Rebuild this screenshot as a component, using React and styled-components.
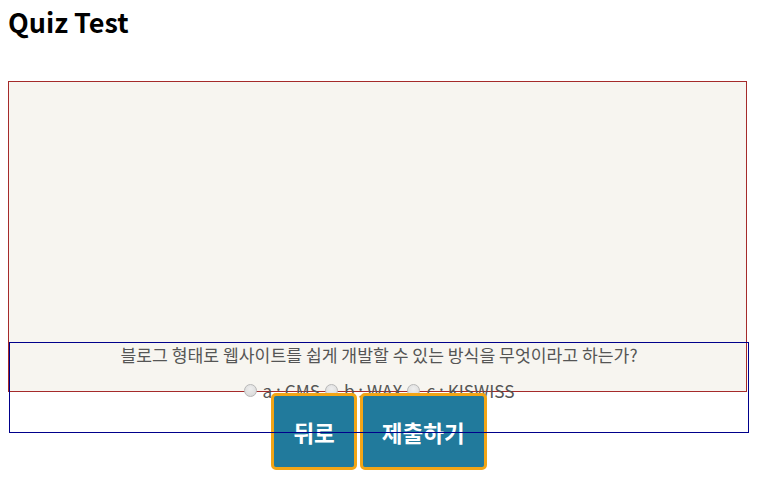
import React from "react";
import styled, { createGlobalStyle } from "styled-components";

const GlobalStyle = createGlobalStyle`
  html, body { margin: 0; padding: 0; background: #ffffff; }
  body { font-family: "Noto Sans CJK KR", "Noto Sans", sans-serif; }
  * { box-sizing: border-box; }
`;

const Page = styled.div`
  padding: 6px 8px 17px 8px;
`;

const Title = styled.h2`
  margin: 0;
  font-size: 27px;
  font-weight: 700;
  color: #000;
  line-height: 32px;
`;

const Stage = styled.div`
  margin-top: 43px;
  width: 739px;
  height: 311px;
  border: 1px solid #a52a2a;
  background: #f7f5f0;
`;

const QuizPanel = styled.div`
  position: relative;
  margin-top: -50px;
  margin-left: 1px;
  width: 740px;
  padding-top: 1px;
  &::after {
    content: "";
    position: absolute;
    top: 0;
    left: 0;
    right: 0;
    height: 89px;
    border: 1px solid #00008b;
    pointer-events: none;
    z-index: 1;
  }
`;

const Question = styled.p`
  margin: 0;
  font-size: 17.2px;
  line-height: 23px;
  color: #555;
  text-align: center;
`;

const Options = styled.div`
  margin-top: 21px;
  height: 6px;
  display: flex;
  align-items: center;
  justify-content: center;
  gap: 5px;
  font-size: 17.2px;
  line-height: 23px;
  color: #555;
`;

const Option = styled.label`
  display: flex;
  align-items: center;
  gap: 6px;
  white-space: pre;
`;

const Radio = styled.input`
  appearance: none;
  margin: 0;
  width: 13px;
  height: 13px;
  border-radius: 50%;
  border: 1px solid #b8b8b8;
  background: radial-gradient(circle at 50% 35%, #eeeeee 0%, #d6d6d6 100%);
`;

const Buttons = styled.div`
  display: flex;
  justify-content: center;
  gap: 3px;
`;

const Button = styled.button`
  height: 77px;
  padding: 0 19px;
  border: 3px solid #f2a516;
  border-radius: 5px;
  background: #217a9c;
  color: #ffffff;
  font-family: "Noto Sans CJK KR", "Noto Sans", sans-serif;
  font-size: 22.5px;
  font-weight: 700;
  cursor: pointer;
`;

const options = [
  { id: "a", label: "a : CMS" },
  { id: "b", label: "b : WAX" },
  { id: "c", label: "c : KISWISS" },
];

export default function App() {
  return (
    <>
      <GlobalStyle />
      <Page>
        <Title>Quiz Test</Title>
        <Stage />
        <QuizPanel>
          <Question>블로그 형태로 웹사이트를 쉽게 개발할 수 있는 방식을 무엇이라고 하는가?</Question>
          <Options>
            {options.map((o) => (
              <Option key={o.id}>
                <Radio type="radio" name="quiz" value={o.id} />
                {o.label}
              </Option>
            ))}
          </Options>
          <Buttons>
            <Button type="button">뒤로</Button>
            <Button type="button">제출하기</Button>
          </Buttons>
        </QuizPanel>
      </Page>
    </>
  );
}
